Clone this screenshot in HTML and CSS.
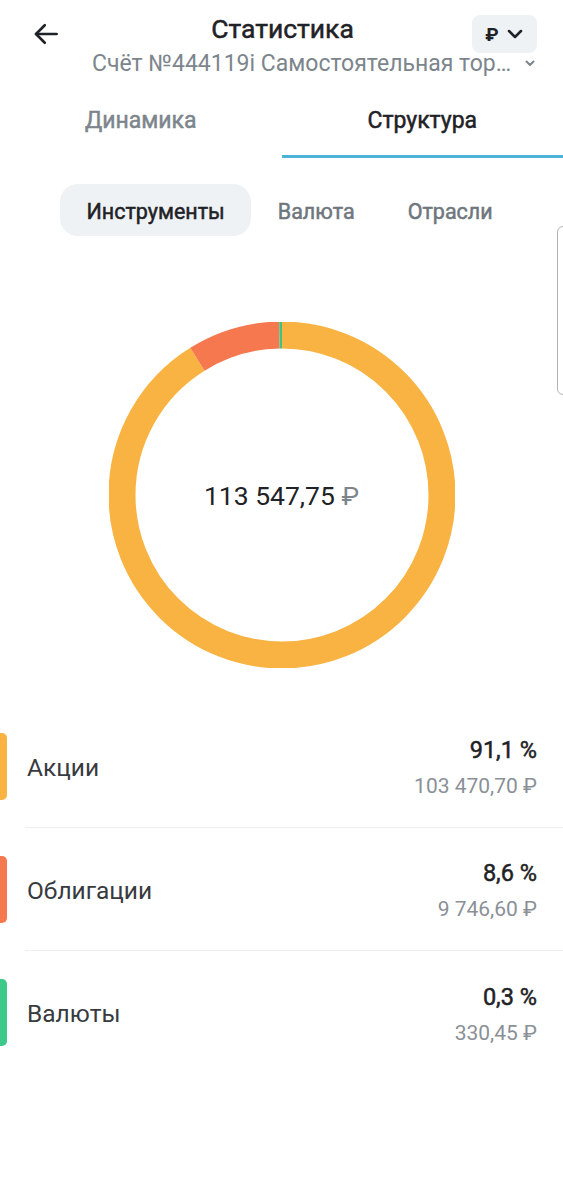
FILE: index.html
```html
<!DOCTYPE html>
<html>
<head>
    <title>Статистика</title>
    <link rel="stylesheet" href="styles.css">
</head>
<body>
    <div class="page">
        <div class="topbar">
            <a class="back" href="#">
                <svg width="30" height="30" viewBox="0 0 24 24" fill="none" stroke="#1f2226" stroke-width="2.1" stroke-linecap="round" stroke-linejoin="round">
                    <path d="M20.5 12H4"/>
                    <path d="M11 5l-7 7 7 7"/>
                </svg>
            </a>
            <div class="title">Статистика</div>
            <button class="currency">
                <span class="rub">₽</span>
                <svg width="18" height="18" viewBox="0 0 24 24" fill="none" stroke="#1f2226" stroke-width="3.4" stroke-linecap="round" stroke-linejoin="round">
                    <path d="M4 8l8 8 8-8"/>
                </svg>
            </button>
        </div>
        <div class="account">
            <span>Счёт №444119і Самостоятельная тор…</span>
            <svg width="12" height="12" viewBox="0 0 24 24" fill="none" stroke="#7d858c" stroke-width="4" stroke-linecap="round" stroke-linejoin="round">
                <path d="M5 9l7 7 7-7"/>
            </svg>
        </div>

        <div class="tabs">
            <div class="tab">Динамика</div>
            <div class="tab active">Структура</div>
        </div>

        <div class="segments">
            <div class="seg selected">Инструменты</div>
            <div class="seg">Валюта</div>
            <div class="seg">Отрасли</div>
        </div>

        <div class="handle"></div>

        <div class="chart">
            <svg class="donut" width="346" height="346" viewBox="0 0 346 346">
                <g transform="rotate(-90 173 173)" fill="none" stroke-width="27">
                    <!-- circumference 2*pi*160 = 1005.3 -->
                    <circle cx="173" cy="173" r="160" stroke="#f9b342" stroke-dasharray="915.8 1005.3" stroke-dashoffset="0"/>
                    <circle cx="173" cy="173" r="160" stroke="#f5784f" stroke-dasharray="86.5 1005.3" stroke-dashoffset="-915.8"/>
                    <circle cx="173" cy="173" r="160" stroke="#3fc47f" stroke-dasharray="3 1005.3" stroke-dashoffset="-1002.3"/>
                </g>
            </svg>
            <div class="total">113 547,75 <span class="cur">₽</span></div>
        </div>

        <div class="list">
            <div class="row">
                <div class="mark yellow"></div>
                <div class="body">
                    <div class="name">Акции</div>
                    <div class="nums">
                        <div class="pct">91,1 %</div>
                        <div class="sum">103 470,70 ₽</div>
                    </div>
                </div>
            </div>
            <div class="row">
                <div class="mark red"></div>
                <div class="body">
                    <div class="name">Облигации</div>
                    <div class="nums">
                        <div class="pct">8,6 %</div>
                        <div class="sum">9 746,60 ₽</div>
                    </div>
                </div>
            </div>
            <div class="row last">
                <div class="mark green"></div>
                <div class="body">
                    <div class="name">Валюты</div>
                    <div class="nums">
                        <div class="pct">0,3 %</div>
                        <div class="sum">330,45 ₽</div>
                    </div>
                </div>
            </div>
        </div>
    </div>
</body>
</html>
```

FILE: styles.css
```css
body {
    font-family: Roboto, "Noto Sans", sans-serif;
    background-color: #fff;
    color: #1f2226;
    margin: 0;
    padding: 0;
}

.page {
    position: relative;
    width: 563px;
    overflow: hidden;
}

/* no medium face installed, so thicken the regular one a little */
.title,
.tab,
.seg,
.pct {
    font-weight: 400;
    -webkit-text-stroke: 0.5px currentColor;
}

/* header */
.topbar {
    display: flex;
    align-items: center;
    height: 52px;
    padding: 0 26px 0 31px;
}

.back {
    display: flex;
    width: 30px;
    height: 30px;
    margin-top: 16px;
}

.title {
    flex: 1;
    text-align: center;
    font-size: 26.5px;
    padding-left: 32px;
    margin-top: 4px;
}

.currency {
    display: flex;
    align-items: center;
    justify-content: center;
    gap: 7px;
    width: 65px;
    height: 38px;
    margin-top: 16px;
    border: none;
    border-radius: 8px;
    background-color: #eff2f5;
    padding: 0;
}

.rub {
    font-family: Roboto, sans-serif;
    font-size: 19px;
    font-weight: 700;
    color: #1f2226;
}

.account {
    display: flex;
    align-items: center;
    gap: 13px;
    padding-left: 92px;
    height: 26px;
    margin-top: -2px;
    font-size: 23px;
    color: #7d858c;
}

/* tabs */
.tabs {
    display: flex;
    margin-top: 6px;
}

.tab {
    flex: 1;
    height: 73px;
    line-height: 78px;
    text-align: center;
    font-size: 23px;
    color: #7d858c;
    border-bottom: 3px solid transparent;
}

.tab.active {
    color: #1f2226;
    border-bottom-color: #4bb3d9;
}

/* segmented control */
.segments {
    display: flex;
    margin: 26px 0 0 60px;
}

.seg {
    height: 52px;
    line-height: 55px;
    padding: 0 26.5px;
    font-size: 21.5px;
    color: #6f777e;
    border-radius: 18px;
}

.seg.selected {
    background-color: #eff2f5;
    color: #1f2226;
}

.handle {
    position: absolute;
    top: 226px;
    right: -6px;
    width: 10px;
    height: 167px;
    border: 1.5px solid #b4b4b4;
    border-radius: 8px;
}

/* donut */
.chart {
    display: grid;
    place-items: center;
    margin-top: 86px;
}

.donut,
.total {
    grid-area: 1 / 1;
}

.total {
    font-size: 26.5px;
    color: #1f2226;
}

.total .cur {
    color: #7d858c;
}

/* list */
.list {
    margin-top: 37px;
}

.row {
    display: flex;
    align-items: stretch;
    height: 123px;
}

.mark {
    align-self: center;
    width: 7px;
    height: 67px;
    border-radius: 0 5px 5px 0;
}

.mark.yellow { background-color: #f9b342; }
.mark.red { background-color: #f5784f; }
.mark.green { background-color: #3cc98a; }

.body {
    flex: 1;
    display: flex;
    align-items: center;
    justify-content: space-between;
    margin-left: 18px;
    padding-right: 26px;
    border-bottom: 1px solid #eceff1;
}

.row.last .body {
    border-bottom: none;
}

.name {
    font-size: 24.5px;
    color: #383b3e;
    margin: 2px 0 0 2px;
}

.nums {
    text-align: right;
    margin-top: 4px;
}

.pct {
    font-size: 23.5px;
    line-height: 26px;
    color: #1f2226;
}

.sum {
    font-size: 21px;
    line-height: 26px;
    margin-top: 10px;
    color: #8a9096;
}
```
